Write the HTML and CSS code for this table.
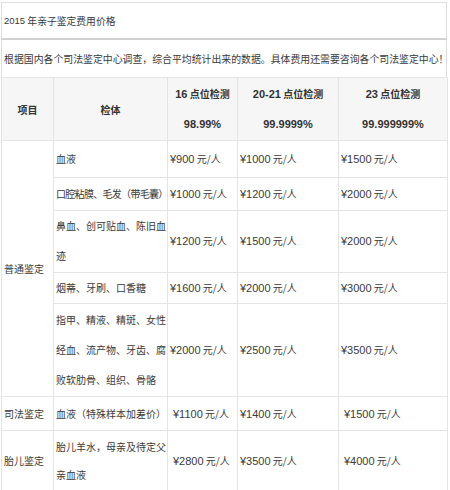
FILE: index.html
```html
<!DOCTYPE html>
<html lang="zh-CN">
<head>
<meta charset="utf-8">
<title>2015 年亲子鉴定费用价格</title>
<link rel="stylesheet" href="styles.css">
</head>
<body>
<div class="wrap">
  <div class="title"><span class="lat">2015</span>&nbsp;年亲子鉴定费用价格</div>
  <div class="intro">根据国内各个司法鉴定中心调查，综合平均统计出来的数据。具体费用还需要咨询各个司法鉴定中心！</div>
  <table class="price-table">
    <colgroup>
      <col class="c1"><col class="c2"><col class="c3"><col class="c4"><col class="c5">
    </colgroup>
    <thead>
      <tr class="head">
        <th>项目</th>
        <th>检体</th>
        <th><span class="num">16</span> 点位检测<br><span class="num">98.99%</span></th>
        <th><span class="num">20-21</span> 点位检测<br><span class="num">99.9999%</span></th>
        <th><span class="num">23</span> 点位检测<br><span class="num">99.999999%</span></th>
      </tr>
    </thead>
    <tbody>
      <tr class="r1">
        <td rowspan="5">普通鉴定</td>
        <td class="plain">血液</td>
        <td><span class="num">¥900</span> 元/人</td>
        <td><span class="num">¥1000</span> 元/人</td>
        <td><span class="num">¥1500</span> 元/人</td>
      </tr>
      <tr class="r2">
        <td class="tight">口腔粘膜、毛发（带毛囊）</td>
        <td><span class="num">¥1000</span> 元/人</td>
        <td><span class="num">¥1200</span> 元/人</td>
        <td><span class="num">¥2000</span> 元/人</td>
      </tr>
      <tr class="r3">
        <td>鼻血、创可贴血、陈旧血<br>迹</td>
        <td><span class="num">¥1200</span> 元/人</td>
        <td><span class="num">¥1500</span> 元/人</td>
        <td><span class="num">¥2000</span> 元/人</td>
      </tr>
      <tr class="r4">
        <td>烟蒂、牙刷、口香糖</td>
        <td><span class="num">¥1600</span> 元/人</td>
        <td><span class="num">¥2000</span> 元/人</td>
        <td><span class="num">¥3000</span> 元/人</td>
      </tr>
      <tr class="r5">
        <td>指甲、精液、精斑、女性<br>经血、流产物、牙齿、腐<br>败软肋骨、组织、骨骼</td>
        <td><span class="num">¥2000</span> 元/人</td>
        <td><span class="num">¥2500</span> 元/人</td>
        <td><span class="num">¥3500</span> 元/人</td>
      </tr>
      <tr class="r6">
        <td>司法鉴定</td>
        <td>血液（特殊样本加差价）</td>
        <td class="pad"><span class="num">¥1100</span> 元/人</td>
        <td><span class="num">¥1400</span> 元/人</td>
        <td class="pad"><span class="num">¥1500</span> 元/人</td>
      </tr>
      <tr class="r7">
        <td>胎儿鉴定</td>
        <td>胎儿羊水，母亲及待定父<br>亲血液</td>
        <td class="pad"><span class="num">¥2800</span> 元/人</td>
        <td><span class="num">¥3500</span> 元/人</td>
        <td class="pad"><span class="num">¥4000</span> 元/人</td>
      </tr>
    </tbody>
  </table>
</div>
</body>
</html>
```

FILE: styles.css
```css
html, body {
  margin: 0;
  padding: 0;
  background: #ffffff;
}

body {
  font-family: "Liberation Sans", "Noto Sans CJK SC", sans-serif;
  font-size: 10px;
  color: #3a3a3a;
}

.wrap {
  width: 446px;
  margin: 2px 0 0 1px;
}

.title {
  height: 35px;
  border: 1px solid #dedede;
  border-bottom: 2px solid #d0d0d0;
  padding-left: 2px;
  display: flex;
  align-items: center;
  font-family: "Noto Sans CJK SC", sans-serif;
  font-size: 9.8px;
  white-space: nowrap;
  color: #3a3a3a;
}

.title .lat {
  font-family: "Liberation Sans", sans-serif;
  font-size: 9.5px;
}

.intro {
  height: 37px;
  border-left: 1px solid #dedede;
  border-right: 1px solid #dedede;
  padding-left: 2px;
  display: flex;
  align-items: center;
  font-family: "Noto Sans CJK SC", sans-serif;
  font-size: 9.9px;
  white-space: nowrap;
  overflow: hidden;
  color: #3a3a3a;
}

.price-table {
  width: 446px;
  border-collapse: collapse;
  table-layout: fixed;
  font-family: "Noto Sans CJK SC", sans-serif;
  font-size: 10px;
  color: #3a3a3a;
}

.c1 { width: 52px; }
.c2 { width: 114px; }
.c3 { width: 70px; }
.c4 { width: 101px; }
.c5 { width: 109px; }

.price-table th,
.price-table td {
  border: 1px solid #e4e4e4;
  vertical-align: middle;
  line-height: 30px;
  padding: 0 0 0 2px;
  white-space: nowrap;
  overflow: visible;
  color: #3a3a3a;
  -webkit-text-fill-color: #3a3a3a;
}

.price-table th {
  background: #f6f6f6;
  font-weight: bold;
  text-align: center;
  line-height: 29px;
  padding: 1px 0;
  color: #333333;
  -webkit-text-fill-color: #333333;
}

.price-table td {
  text-align: left;
}

.plain {
  color: #3a3a3a;
  -webkit-text-fill-color: #3a3a3a;
}

.num {
  font-family: "Liberation Sans", sans-serif;
  font-size: 11px;
}

.tight {
  letter-spacing: -0.7px;
}

.pad {
  padding-left: 5px !important;
}

.r1 td { padding-top: 3px; padding-bottom: 3px; }
.r2 td { padding-top: 1px; padding-bottom: 1px; }
.r3 td { padding-top: 0; padding-bottom: 1px; }
.r4 td { padding-top: 0; padding-bottom: 0; }
.r5 td { padding-top: 1px; padding-bottom: 1px; }
.r6 td { padding-top: 2px; padding-bottom: 1px; }
.r7 td { padding-top: 2px; padding-bottom: 2px; line-height: 28px; }
```
